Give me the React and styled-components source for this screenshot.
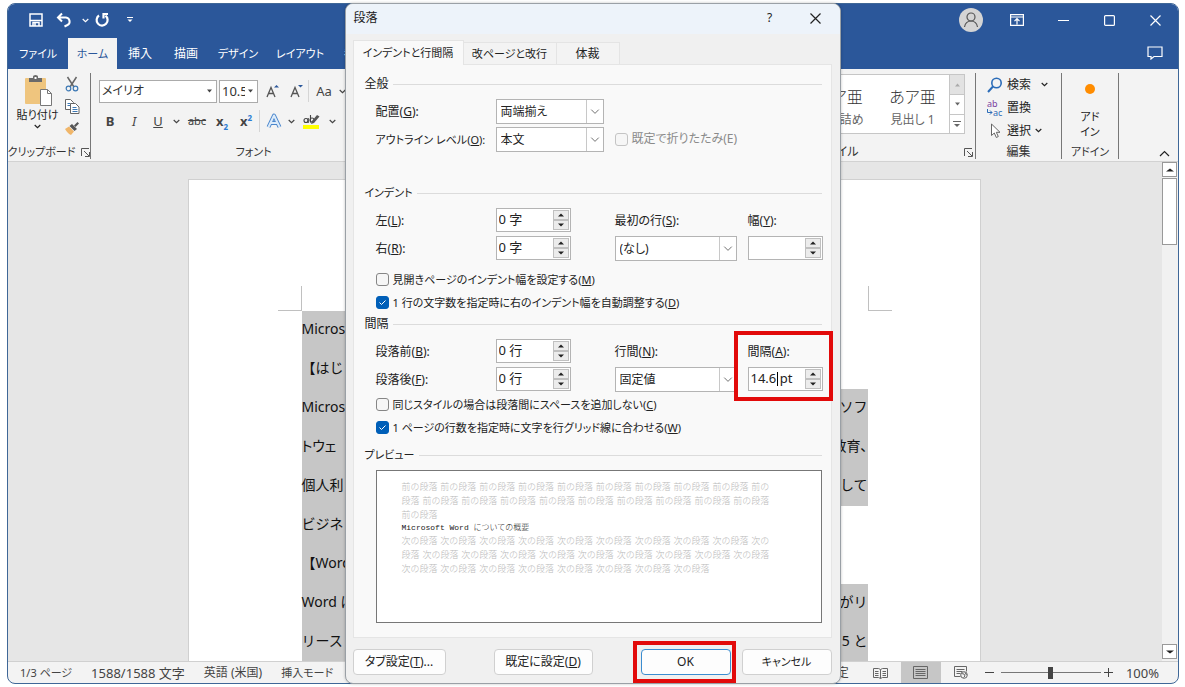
import React, { useState } from "react";
import styled, { createGlobalStyle, css } from "styled-components";

const GlobalStyle = createGlobalStyle`
  * {
    box-sizing: border-box;
  }
  body {
    margin: 0;
    background: #fff;
    color: #222;
    font-family: "Noto Sans", "Noto Sans CJK JP", sans-serif;
    font-size: 12px;
    line-height: 18px;
    font-feature-settings: "palt";
  }
  button, input, select {
    font: inherit;
    font-feature-settings: inherit;
    color: inherit;
    margin: 0;
  }
  svg {
    flex: none;
  }
`;

/* ---------- window ---------- */

const Screen = styled.div`
  height: 100vh;
  min-height: 687px;
  padding: 3px 6px 3px 7px;
`;

const AppWindow = styled.div`
  position: relative;
  display: flex;
  flex-direction: column;
  height: 100%;
  border: 1px solid #3f6797;
  border-radius: 8px;
  background: #f3f3f3;
`;

const Header = styled.header`
  background: #2b579a;
  color: #fff;
  border-radius: 7px 7px 0 0;
`;

const TitleBar = styled.div`
  display: flex;
  align-items: center;
  height: 34px;
  padding-bottom: 2px;
`;

const QuickAccess = styled.div`
  display: flex;
  align-items: center;
  flex: 1;
  padding-left: 17px;
`;

const IconButton = styled.button`
  display: flex;
  align-items: center;
  justify-content: center;
  flex: none;
  width: ${(p) => p.$w || 22}px;
  height: ${(p) => p.$h || 22}px;
  padding: 0;
  border: 0;
  background: none;
`;

const Avatar = styled.div`
  display: flex;
  align-items: center;
  justify-content: center;
  width: 24px;
  height: 24px;
  margin-right: 11px;
  border-radius: 50%;
  background: #d4d4d4;
`;

const TabRow = styled.nav`
  display: flex;
  height: 31px;
`;

const RibbonTab = styled.button`
  width: ${(p) => p.$w}px;
  padding: 0;
  border: 0;
  white-space: nowrap;
  font-size: ${(p) => (p.$kana ? 11 : 12)}px;
  background: ${(p) => (p.$active ? "#f3f3f3" : "none")};
  color: ${(p) => (p.$active ? "#2b579a" : "#fff")};
`;

const CommentCorner = styled.div`
  margin-left: auto;
`;

const Ribbon = styled.div`
  display: flex;
  height: 93px;
  padding-top: 4px;
  border-bottom: 1px solid #d2d2d2;
`;

const Group = styled.section`
  display: flex;
  flex-direction: column;
  flex: ${(p) => (p.$w ? "none" : 1)};
  width: ${(p) => p.$w || 0}px;
  height: 86px;
  border-right: ${(p) => (p.$line ? "1px solid #777" : "0")};
  white-space: nowrap;
`;

const GroupBody = styled.div`
  display: flex;
  flex: 1;
`;

const GroupFooter = styled.div`
  display: flex;
  align-items: center;
  justify-content: center;
  gap: 6px;
  height: 14px;
  line-height: 14px;
  color: #333;
  font-size: ${(p) => (p.$kana ? 11 : 12)}px;
`;

const StylesFooter = styled(GroupFooter)`
  display: grid;
  grid-template-columns: 1fr auto 1fr;
  padding-right: 2px;
  svg {
    grid-column: 3;
    justify-self: end;
  }
  span {
    grid-column: 2;
  }
`;

const PasteButton = styled.button`
  display: flex;
  flex-direction: column;
  align-items: center;
  width: 56px;
  padding: 2px 0 0 3px;
  border: 0;
  background: none;
  font-size: 11px;
`;

const SmallTools = styled.div`
  display: flex;
  flex-direction: column;
`;

const FontTools = styled.div`
  padding: 5px 0 0 8px;
`;

const ToolRow = styled.div`
  display: flex;
  align-items: center;
  height: 26px;
  margin-bottom: 4px;
  color: #444;
`;

const Combo = styled.span`
  position: relative;
  display: flex;
  margin-right: 2px;
  svg {
    position: absolute;
    right: 5px;
    top: 9px;
    pointer-events: none;
  }
  select {
    appearance: none;
    width: ${(p) => p.$w}px;
    height: 23px;
    padding: 0 ${(p) => p.$pad}px 0 2px;
    border: 1px solid #ababab;
    border-radius: 0;
    background: #fff;
    color: #333;
    font-size: ${(p) => p.$size}px;
    text-overflow: clip;
  }
`;

const Letter = styled.button`
  width: ${(p) => p.$w || 24}px;
  height: 24px;
  padding: 0;
  border: 0;
  background: none;
  font-size: ${(p) => (p.$small ? 11 : 13)}px;
  font-weight: ${(p) => (p.$bold ? 700 : 400)};
  font-style: ${(p) => (p.$italic ? "italic" : "normal")};
  text-decoration: ${(p) => p.$line || "none"};
  sub, sup {
    font-size: 8px;
    line-height: 0;
    color: #2b7cd3;
  }
`;

const Rule = styled.span`
  width: 1px;
  height: 22px;
  background: #d5d5d5;
`;

const Gallery = styled.div`
  display: flex;
  align-self: flex-start;
  margin: 1px 10px 0 auto;
  height: 60px;
  border: 1px solid #c6c6c6;
  background: #fff;
`;

const StyleCard = styled.button`
  width: 73px;
  padding: 6px 0 0;
  border: 0;
  background: none;
  color: #666;
  span {
    display: block;
    margin-bottom: 2px;
    font-size: 16px;
    line-height: 24px;
    font-weight: 300;
    color: #333;
  }
`;

const GalleryScroll = styled.div`
  display: grid;
  grid-template-rows: 1fr 1fr 1fr;
  width: 15px;
  border-left: 1px solid #c6c6c6;
  color: #666;
  button {
    width: 14px;
    height: auto;
  }
  button + button {
    border-top: 1px solid #c6c6c6;
  }
  button:first-child {
    background: #e2e2e2;
    color: #aaa;
  }
`;

const EditList = styled.div`
  display: flex;
  flex-direction: column;
  flex: 1;
  padding: 0 0 0 11px;
`;

const EditButton = styled.button`
  display: flex;
  align-items: center;
  gap: 4px;
  height: 23px;
  padding: 0;
  border: 0;
  background: none;
`;

const AddinButton = styled.button`
  display: flex;
  flex-direction: column;
  align-items: center;
  width: 100%;
  padding: 9px 0 0;
  border: 0;
  background: none;
  font-size: 11px;
  line-height: 15px;
`;

const Dot = styled.span`
  width: 10px;
  height: 10px;
  margin: 2px 0 15px;
  border-radius: 50%;
  background: #ff8c00;
`;

const Collapse = styled.div`
  display: flex;
  flex: none;
  width: 59px;
  align-items: flex-end;
  justify-content: flex-end;
  padding: 0 5px 0 0;
`;

/* ---------- document ---------- */

const Workspace = styled.main`
  display: flex;
  flex: 1;
  min-height: 0;
  background: #e6e6e6;
`;

const Canvas = styled.div`
  display: flex;
  justify-content: center;
  flex: 1;
  min-width: 0;
  padding: 17px 2px 0 0;
  overflow: hidden;
`;

const Paper = styled.article`
  flex: none;
  width: 793px;
  padding: 106px 88px 0 89px;
  border: 1px solid #d0d0d0;
  border-bottom: 0;
  background: #fff;
`;

const CropMarks = styled.div`
  display: flex;
  justify-content: space-between;
  height: 25px;
  &::before, &::after {
    content: "";
    width: 23px;
    border: 0 solid #c0c0c0;
    border-bottom-width: 1px;
  }
  &::before {
    border-right-width: 1px;
  }
  &::after {
    border-left-width: 1px;
  }
`;

const DocLine = styled.p`
  display: flex;
  justify-content: space-between;
  width: ${(p) => (p.$short ? "50%" : "auto")};
  margin: 0 24px;
  padding-bottom: 3px;
  background: #c6c6c6;
  color: #111;
  font-size: 14px;
  line-height: 36px;
  font-feature-settings: ${(p) => (p.$tight ? '"palt"' : "normal")};
  white-space: nowrap;
`;

const Scrollbar = styled.div`
  display: flex;
  flex-direction: column;
  width: 16px;
  padding-bottom: 2px;
  background: #f1f1f1;
  button {
    width: 15px;
    height: 15px;
    border: 1px solid #999;
    background: #fff;
  }
`;

const Thumb = styled.div`
  width: 15px;
  height: 67px;
  margin: 1px 0 auto;
  border: 1px solid #999;
  background: #fff;
`;

const StatusBar = styled.footer`
  display: flex;
  align-items: center;
  height: 22px;
  padding: 0 19px 0 12px;
  border-top: 1px solid #d0d0d0;
  border-radius: 0 0 7px 7px;
  color: #444;
  white-space: nowrap;
`;

const StatusTexts = styled.div`
  display: flex;
  flex: 1;
  gap: 19px;
`;

const StatusText = styled.span`
  font-size: ${(p) => p.$size || 12}px;
`;

const ViewTools = styled.div`
  display: flex;
  align-items: center;
  margin: 0 11px 0 12px;
`;

const ViewButton = styled(IconButton)`
  width: 40px;
  height: 21px;
  background: ${(p) => (p.$active ? "#c6c6c6" : "none")};
`;

const Zoom = styled.input`
  appearance: none;
  width: 100px;
  height: 16px;
  margin: 0 2px;
  background: linear-gradient(#777, #777) center / 100% 1px no-repeat;
  &::-webkit-slider-thumb {
    appearance: none;
    width: 5px;
    height: 12px;
    background: #444;
  }
`;

/* ---------- dialog ---------- */

const DialogBox = styled.div`
  position: absolute;
  top: -1px;
  left: 0;
  right: 1px;
  width: 496px;
  margin: 0 auto;
  border: 1px solid #9aa0a6;
  border-radius: 8px;
  background: #f0f0f0;
  box-shadow: 0 0 3px rgba(0, 0, 0, 0.25);
`;

const DialogTitle = styled.div`
  display: flex;
  align-items: center;
  height: 30px;
  padding: 0 1px 2px 8px;
  border-radius: 7px 7px 0 0;
  background: #edf3fa;
  h2 {
    flex: 1;
    margin: 0;
    font-size: 12px;
    font-weight: 400;
  }
`;

const DialogTabs = styled.div`
  display: flex;
  align-items: flex-end;
  height: 30px;
  padding: 0 7px;
`;

const DialogTab = styled.button`
  width: ${(p) => p.$w}px;
  height: 22px;
  padding: 0;
  border: 1px solid #e4e4e4;
  border-width: 1px 1px 0 0;
  background: #f3f3f3;
  font-size: ${(p) => (p.$kana ? 11 : 12)}px;
  white-space: nowrap;
  ${(p) =>
    p.$active &&
    css`
      position: relative;
      height: 25px;
      margin-bottom: -1px;
      border-left-width: 1px;
      background: #f9f9f9;
    `}
`;

const Panel = styled.div`
  margin: 0 8px 0 7px;
  padding: 10px 9px 14px 11px;
  border: 1px solid #e5e5e5;
  background: #f9f9f9;
`;

const Section = styled.section`
  margin-top: ${(p) => p.$top || 0}px;
`;

const SectionTitle = styled.h3`
  display: flex;
  align-items: center;
  gap: 4px;
  margin: 0 0 4px;
  font-size: ${(p) => (p.$kana ? 11 : 12)}px;
  font-weight: 400;
  &::after {
    content: "";
    flex: 1;
    height: 1px;
    background: #dcdcdc;
  }
`;

const Fields = styled.div`
  display: grid;
  grid-template-columns: 120px 119px 133px 75px;
  grid-auto-rows: 28px;
  align-items: center;
  padding-left: 11px;
  white-space: nowrap;
`;

const Label = styled.label`
  padding-top: 1px;
  font-size: ${(p) => (p.$kana ? 11 : 12)}px;
`;

const Stack = styled.div`
  position: relative;
  display: grid;
  grid-template-rows: 28px 28px;
  align-items: center;
  grid-row: 1 / 3;
  grid-column: ${(p) => p.$col};
`;

const SelectBox = styled.span`
  position: relative;
  display: block;
  width: ${(p) => p.$w}px;
  select {
    display: block;
    appearance: none;
    width: 100%;
    height: 25px;
    padding: 1px 20px 0 4px;
    border: 1px solid #b4b4b4;
    border-radius: 0;
    background: #fff;
  }
  svg {
    position: absolute;
    top: 1px;
    right: 1px;
    border-left: 1px solid #c8c8c8;
    pointer-events: none;
  }
`;

const SpinBox = styled.span`
  position: relative;
  display: flex;
  width: 75px;
  height: 24px;
  padding: 1px;
  border: 1px solid #b4b4b4;
  background: #fff;
  input {
    flex: 1;
    min-width: 0;
    padding: 0 1px 2px;
    border: 0;
    outline: 0;
    background: none;
    font-size: 13px;
  }
`;

const SpinButtons = styled.span`
  display: grid;
  grid-template-rows: 1fr 1fr;
  button {
    width: 16px;
    height: auto;
    border: 1px solid #c0c0c0;
    background: #ececec;
  }
`;

const Caret = styled.span`
  position: absolute;
  left: 28px;
  top: 4px;
  width: 1px;
  height: 14px;
  background: #000;
`;

const CheckList = styled.div`
  padding: ${(p) => p.$top || 0}px 0 0 11px;
`;

const CheckLabel = styled.label`
  display: flex;
  align-items: center;
  gap: 4px;
  height: ${(p) => (p.$inline ? 28 : 23)}px;
  color: ${(p) => (p.$muted ? "#8a8a8a" : "inherit")};
  font-size: ${(p) => (p.$inline ? 12 : 11)}px;
  white-space: nowrap;
  input {
    appearance: none;
    flex: none;
    width: 13px;
    height: 13px;
    border: 1px solid ${(p) => (p.$muted ? "#c4c4c4" : "#868686")};
    border-radius: 3px;
    background: #f6f6f6 center / 11px 11px no-repeat;
  }
  input:checked {
    border-color: #005fb8;
    background-color: #005fb8;
    background-image: url("data:image/svg+xml,%3Csvg xmlns='http://www.w3.org/2000/svg' viewBox='0 0 11 11'%3E%3Cpath d='M2.5 5.5l2 2 4-4' fill='none' stroke='white'/%3E%3C/svg%3E");
  }
`;

const Preview = styled.div`
  height: 153px;
  margin: 6px 0 0 11px;
  padding: 9px 0 0 25px;
  border: 1px solid #777;
  background: #fff;
  color: #b9b9b9;
  font-family: "DejaVu Sans", "Noto Sans CJK JP", sans-serif;
  font-size: 9px;
  line-height: 14px;
  font-weight: 300;
  font-feature-settings: normal;
  white-space: pre;
  p {
    margin: 0;
    color: #222;
    font-size: 8px;
    line-height: 12px;
    font-family: "Liberation Mono", "Noto Sans CJK JP", monospace;
  }
`;

const DialogFooter = styled.div`
  display: flex;
  justify-content: space-between;
  padding: 11px 8px 8px 7px;
`;

const ButtonPair = styled.div`
  display: flex;
  gap: 11px;
`;

const PushWrap = styled.span`
  position: relative;
  display: flex;
`;

const PushButton = styled.button`
  width: ${(p) => p.$w || 90}px;
  height: 26px;
  padding: 0;
  border: 1px solid ${(p) => (p.$primary ? "#3b8dd0" : "#d0d0d0")};
  border-radius: 4px;
  background: #fdfdfd;
  font-size: ${(p) => (p.$kana ? 11 : 12)}px;
  white-space: nowrap;
`;

const Highlight = styled.span`
  position: absolute;
  inset: ${(p) => p.$inset};
  border: 4px solid #e20a0a;
  pointer-events: none;
`;

/* ---------- icons ---------- */

const Svg = ({ w = 16, h = w, children, ...rest }) => (
  <svg
    width={w}
    height={h}
    viewBox={`0 0 ${w} ${h}`}
    fill="none"
    stroke="currentColor"
    aria-hidden="true"
    {...rest}
  >
    {children}
  </svg>
);

const Chevron = () => (
  <Svg w={7} h={5} strokeWidth="1.2">
    <path d="M.7 1l2.8 2.6L6.3 1" />
  </Svg>
);

const Triangle = ({ up, w = 5 }) => (
  <Svg w={w} h={4} stroke="none" fill="currentColor">
    <path d={up ? `M0 3.5L${w / 2} 0.5L${w} 3.5z` : `M0 .5L${w / 2} 3.5L${w} .5z`} />
  </Svg>
);

const SelectArrow = () => (
  <Svg w={17} h={23} stroke="#666">
    <path d="M4.5 9.5l4 4 4-4" />
  </Svg>
);

const SaveIcon = () => (
  <Svg w={14} strokeWidth="1.5">
    <path d="M1 1h12v12H1z" />
    <path d="M1 7.5h12" />
    <path d="M4 13v-3.500h6V13M6 10v3" />
  </Svg>
);

const UndoIcon = () => (
  <Svg w={16} strokeWidth="2">
    <path d="M6 1.500L2 5.500l4 4M2.500 5.500h7.500a4 4 0 0 1 1.500 7.500l-3 1.500" />
  </Svg>
);

const RedoIcon = () => (
  <Svg w={16} strokeWidth="2.2">
    <path d="M5 3.500a5.500 5.500 0 1 0 6.500.2" />
    <path d="M14 2H9.500v4.500" />
  </Svg>
);

const LauncherIcon = () => (
  <Svg w={9} stroke="#555">
    <path d="M.5 8V.5H8M3 3l5 5M8.500 4v4.500H4" />
  </Svg>
);

const PasteIcon = () => (
  <Svg w={28} h={31} stroke="none">
    <rect x="1" y="3" width="21" height="26" rx="1" fill="#efc57e" />
    <path d="M5 3h4V1.500Q9 0 11.500 0T14 1.500V3h4v4H5z" fill="#6a6a6a" />
    <path d="M10.500 2h2v2h-2z" fill="#fff" />
    <path d="M16.500 14.500h7l4 4v12h-11z" fill="#fff" stroke="#777" />
    <path d="M23.500 14.500v4h4" stroke="#777" />
  </Svg>
);

const CutIcon = () => (
  <Svg w={14} h={16}>
    <path d="M2.500 1l6.500 10M11.500 1L5 11" stroke="#666" strokeWidth="1.500" />
    <circle cx="3.500" cy="12.500" r="2.300" stroke="#3c78b4" strokeWidth="1.200" />
    <circle cx="10.500" cy="12.500" r="2.300" stroke="#3c78b4" strokeWidth="1.200" />
  </Svg>
);

const CopyIcon = () => (
  <Svg w={15} h={15} stroke="#666">
    <path d="M.5.5h5l3 3v7h-8z" fill="#fff" />
    <path d="M2.500 4.500h3M2.500 6.500h3" stroke="#3c78b4" />
    <path d="M5.500 4.500h5l3.500 3.500v6.500H5.500z" fill="#fff" />
    <path d="M7.500 8.500h4M7.500 10.500h5M7.500 12.500h5" stroke="#3c78b4" />
  </Svg>
);

const BrushIcon = () => (
  <Svg w={14} h={13} stroke="none">
    <path d="M0 7l4-2.500 5 5L6 13Q3 12 0 7z" fill="#f0b66a" />
    <path d="M4.500 4L7 2l5 5-2.500 2z" fill="#555" />
    <path d="M9 3.500L12.500 0 14 1.500 10.500 5z" fill="#555" />
  </Svg>
);

const GrowIcon = ({ down }) => (
  <Svg w={14} h={16}>
    <path d="M1 14L5 4.500 9 14M2.500 10.500h5" stroke="#555" strokeWidth="1.300" />
    <path d={down ? "M8 2h5l-2.500 2.500z" : "M8 4.500h5L10.500 2z"} fill="#2b579a" stroke="none" />
  </Svg>
);

const EffectIcon = () => (
  <Svg w={16} h={16} strokeLinejoin="round">
    <path d="M2.500 14L8 2.500 13.500 14M5 10h6" stroke="#4a86cc" strokeWidth="4" />
    <path d="M2.500 14L8 2.500 13.500 14M5 10h6" stroke="#dcebfa" strokeWidth="2" />
  </Svg>
);

const MarkerIcon = () => (
  <Svg w={18} h={17} stroke="none">
    <path d="M0 12h16v4H0z" fill="#ffff00" />
    <circle cx="3" cy="7.500" r="2" stroke="#444" strokeWidth="1.100" />
    <path d="M5.200 5v5M7.500 2v7.500" stroke="#444" strokeWidth="1.100" />
    <circle cx="9" cy="7" r="2" stroke="#444" strokeWidth="1.100" />
    <path d="M8 11l1-3 5-6 2.500 1.500L11 10z" fill="#555" />
  </Svg>
);

const PersonIcon = () => (
  <Svg w={16} h={18} stroke="#555" strokeWidth="1.200">
    <circle cx="8" cy="6" r="4" />
    <path d="M1.500 16q1-6 6.500-6t6.500 6" />
  </Svg>
);

const DisplayIcon = () => (
  <Svg w={14} h={12} strokeWidth="1.200">
    <path d="M.6.6h12.800v10.800H.6zM.6 3h12.800M7 10.500V5M4.500 7.200L7 4.700l2.500 2.500" />
  </Svg>
);

const MinIcon = () => (
  <Svg w={11}>
    <path d="M0 5.500h11" />
  </Svg>
);

const MaxIcon = () => (
  <Svg w={11} strokeWidth="1.200">
    <rect x=".6" y=".6" width="9.800" height="9.800" rx="1" />
  </Svg>
);

const CloseIcon = () => (
  <Svg w={11} strokeWidth="1.200">
    <path d="M.5.5l10 10M10.500.5l-10 10" />
  </Svg>
);

const CommentIcon = () => (
  <Svg w={16} h={14} strokeWidth="1.200">
    <path d="M1 1h14v9.500H7L4 13v-2.500H1z" />
  </Svg>
);

const SearchIcon = () => (
  <Svg w={16} stroke="#2b6cb8" strokeWidth="1.600">
    <circle cx="9.500" cy="6" r="4.700" />
    <path d="M6 9.500L1 15" strokeWidth="2" />
  </Svg>
);

const ReplaceMark = styled.span`
  display: grid;
  width: 16px;
  font-size: 9px;
  line-height: 9px;
  text-align: left;
  color: #7a3fa0;
  span {
    display: flex;
    align-items: center;
    color: #2b6cb8;
  }
`;

const PointerIcon = () => (
  <Svg w={16} stroke="#666">
    <path d="M4.500 1v11.500l2.800-2.500 2 4.500 2-1-2-4.200h3.700z" fill="#fff" />
  </Svg>
);

const ReadIcon = () => (
  <Svg w={15} h={12} stroke="#666">
    <path d="M.5 1.500h5l2 1 2-1h5v9h-5l-2 1-2-1h-5zM7.500 2.500v9" />
    <path d="M2 4.500h3.500M2 6.500h3.500M2 8.500h3.500M9.500 4.500H13M9.500 6.500H13M9.500 8.500H13" />
  </Svg>
);

const PrintIcon = () => (
  <Svg w={15} h={13} stroke="#666">
    <path d="M.5.5h14v12H.5zM2.500 3.500h10M2.500 5.500h10M2.500 7.500h10M2.500 9.500h10" />
  </Svg>
);

const WebIcon = () => (
  <Svg w={14} h={13} stroke="#666">
    <path d="M6.500 10.500h-6V.5h12v5M2.500 3.500h8M2.500 5.500h6M2.500 7.500h4" />
    <circle cx="10" cy="9" r="3.300" />
    <path d="M7.500 7.500l2.500.500 1 2-1.500 1.500M11 6.500l1.500 2.500" />
  </Svg>
);

/* ---------- parts ---------- */

const Dropdown = ({ id, w, value }) => (
  <SelectBox $w={w}>
    <select id={id} defaultValue={value}>
      <option>{value}</option>
    </select>
    <SelectArrow />
  </SelectBox>
);

const Spinner = ({ id, value, caret }) => (
  <SpinBox>
    <input id={id} type="text" defaultValue={value} />
    {caret && <Caret />}
    <SpinButtons>
      <IconButton aria-label="増やす">
        <Triangle up w={6} />
      </IconButton>
      <IconButton aria-label="減らす">
        <Triangle w={6} />
      </IconButton>
    </SpinButtons>
  </SpinBox>
);

const FieldLabel = ({ htmlFor, text, k, kana }) => (
  <Label htmlFor={htmlFor} $kana={kana}>
    {text}(<u>{k}</u>):
  </Label>
);

const Check = ({ text, k, checked, ...rest }) => {
  const [on, setOn] = useState(!!checked);
  return (
    <CheckLabel {...rest}>
      <input
        type="checkbox"
        checked={on}
        disabled={rest.$muted}
        onChange={() => setOn(!on)}
      />
      <span>
        {text}({rest.$muted ? k : <u>{k}</u>})
      </span>
    </CheckLabel>
  );
};

const ribbonTabs = [
  { name: "ファイル", w: 60, kana: true },
  { name: "ホーム", w: 49, kana: true },
  { name: "挿入", w: 46 },
  { name: "描画", w: 46 },
  { name: "デザイン", w: 58, kana: true },
  { name: "レイアウト", w: 66, kana: true },
  { name: "参", w: 34 },
];

const docLines = [
  { start: "Micros", short: true },
  { start: "【はじ", short: true },
  { start: "Micros", end: "ソフ" },
  { start: "トウェ", end: "教育、", tight: true },
  { start: "個人利", end: "して" },
  { start: "ビジネ", short: true },
  { start: "【Word", short: true },
  { start: "Word は", end: "がリ" },
  { start: "リース", end: "5 と" },
];

const before = "前の段落 ";
const after = "次の段落 ";

const TopBar = () => (
  <Header>
    <TitleBar>
      <QuickAccess>
        <IconButton aria-label="保存"><SaveIcon /></IconButton>
        <IconButton aria-label="元に戻す" $w={34}><UndoIcon /></IconButton>
        <IconButton aria-label="元に戻す一覧" $w={8}><Chevron /></IconButton>
        <IconButton aria-label="やり直し" $w={26}><RedoIcon /></IconButton>
        <IconButton aria-label="カスタマイズ" $w={30}>
          <Svg w={6} h={6}>
            <path d="M0 .5h6" />
            <path d="M.5 2.500h5L3 5z" fill="currentColor" stroke="none" />
          </Svg>
        </IconButton>
      </QuickAccess>
      <Avatar><PersonIcon /></Avatar>
      <IconButton aria-label="リボンの表示" $w={46}><DisplayIcon /></IconButton>
      <IconButton aria-label="最小化" $w={46}><MinIcon /></IconButton>
      <IconButton aria-label="最大化" $w={46}><MaxIcon /></IconButton>
      <IconButton aria-label="閉じる" $w={46}><CloseIcon /></IconButton>
    </TitleBar>
    <TabRow>
      {ribbonTabs.map(({ name, w, kana }) => (
        <RibbonTab key={name} $w={w} $kana={kana} $active={name === "ホーム"}>
          {name}
        </RibbonTab>
      ))}
      <CommentCorner>
        <IconButton aria-label="コメント" $w={46} $h={30}>
          <CommentIcon />
        </IconButton>
      </CommentCorner>
    </TabRow>
  </Header>
);

const RibbonBar = () => (
  <Ribbon>
    <Group $w={83} $line>
      <GroupBody>
        <PasteButton>
          <PasteIcon />
          貼り付け
          <Chevron />
        </PasteButton>
        <SmallTools>
          <IconButton aria-label="切り取り" $w={16}><CutIcon /></IconButton>
          <IconButton aria-label="コピー" $w={16}><CopyIcon /></IconButton>
          <IconButton aria-label="書式のコピー" $w={16}><BrushIcon /></IconButton>
        </SmallTools>
      </GroupBody>
      <GroupFooter $kana>
        クリップボード <LauncherIcon />
      </GroupFooter>
    </Group>
    <Group $w={326} $line>
      <GroupBody>
        <FontTools>
          <ToolRow>
            <Combo $w={118} $pad={16} $size={12}>
              <select aria-label="フォント"><option>メイリオ</option></select>
              <Triangle />
            </Combo>
            <Combo $w={39} $pad={12} $size={13}>
              <select aria-label="フォント サイズ"><option>10.5</option></select>
              <Triangle />
            </Combo>
            <IconButton aria-label="拡大" $w={26}><GrowIcon /></IconButton>
            <IconButton aria-label="縮小" $w={22}><GrowIcon down /></IconButton>
            <Rule />
            <Letter $w={30}>Aa</Letter>
            <Chevron />
          </ToolRow>
          <ToolRow>
            <Letter $bold $w={22}>B</Letter>
            <Letter $italic $w={26}>I</Letter>
            <Letter $line="underline" $w={22}>U</Letter>
            <IconButton aria-label="下線の種類" $w={14}><Chevron /></IconButton>
            <Letter $line="line-through" $w={28} $small>abc</Letter>
            <Letter $bold $w={22}>x<sub>2</sub></Letter>
            <Letter $bold $w={26}>x<sup>2</sup></Letter>
            <Rule />
            <IconButton aria-label="文字の効果" $w={28}><EffectIcon /></IconButton>
            <Chevron />
            <IconButton aria-label="蛍光ペン" $w={34}><MarkerIcon /></IconButton>
            <Chevron />
          </ToolRow>
        </FontTools>
      </GroupBody>
      <GroupFooter $kana>フォント</GroupFooter>
    </Group>
    <Group />
    <Group $w={275} $line>
      <GroupBody>
        <Gallery>
          <StyleCard><span>あア亜</span>行間詰め</StyleCard>
          <StyleCard><span>あア亜</span>見出し 1</StyleCard>
          <GalleryScroll>
            <IconButton aria-label="上へ"><Triangle up /></IconButton>
            <IconButton aria-label="下へ"><Triangle /></IconButton>
            <IconButton aria-label="その他">
              <Svg w={8} h={8}>
                <path d="M0 1.500h8" />
                <path d="M1 4h6L4 7z" fill="currentColor" stroke="none" />
              </Svg>
            </IconButton>
          </GalleryScroll>
        </Gallery>
      </GroupBody>
      <StylesFooter>
        <span>スタイル</span>
        <LauncherIcon />
      </StylesFooter>
    </Group>
    <Group $w={86} $line>
      <EditList>
        <EditButton><SearchIcon /> 検索 <IconButton as="span" $w={18}><Chevron /></IconButton></EditButton>
        <EditButton>
          <ReplaceMark>
            ab
            <span>
              <Svg w={6} h={7}>
                <path d="M.5 0v3.500H5M3 1.500l2 2-2 2" />
              </Svg>
              ac
            </span>
          </ReplaceMark>
          置換
        </EditButton>
        <EditButton><PointerIcon /> 選択 <Chevron /></EditButton>
      </EditList>
      <GroupFooter>編集</GroupFooter>
    </Group>
    <Group $w={57} $line>
      <GroupBody>
        <AddinButton>
          <Dot />
          <span>アド</span>
          <span>イン</span>
        </AddinButton>
      </GroupBody>
      <GroupFooter $kana>アドイン</GroupFooter>
    </Group>
    <Collapse>
      <IconButton aria-label="リボンを折りたたむ" $w={18} $h={16}>
        <Svg w={11} h={7} strokeWidth="1.200">
          <path d="M1 6l4.500-4.500L10 6" />
        </Svg>
      </IconButton>
    </Collapse>
  </Ribbon>
);

const Document = () => (
  <Workspace>
    <Canvas>
      <Paper>
        <CropMarks />
        {docLines.map(({ start, end, short, tight }, i) => (
          <DocLine key={i} $short={short} $tight={tight}>
            <span>{start}</span>
            <span>{end}</span>
          </DocLine>
        ))}
      </Paper>
    </Canvas>
    <Scrollbar>
      <IconButton aria-label="上にスクロール"><Triangle up w={8} /></IconButton>
      <Thumb />
      <IconButton aria-label="下にスクロール"><Triangle w={8} /></IconButton>
    </Scrollbar>
  </Workspace>
);

const Status = () => (
  <StatusBar>
    <StatusTexts>
      <StatusText $size={11}>1/3 ページ</StatusText>
      <StatusText $size={13}>1588/1588 文字</StatusText>
      <StatusText>英語 (米国)</StatusText>
      <StatusText $size={11}>挿入モード</StatusText>
    </StatusTexts>
    <StatusText>定</StatusText>
    <ViewTools>
      <ViewButton aria-label="閲覧モード"><ReadIcon /></ViewButton>
      <ViewButton aria-label="印刷レイアウト" $active><PrintIcon /></ViewButton>
      <ViewButton aria-label="Web レイアウト"><WebIcon /></ViewButton>
      <IconButton aria-label="縮小" $w={18}>
        <Svg w={9}><path d="M0 4.500h9" /></Svg>
      </IconButton>
      <Zoom type="range" aria-label="ズーム" defaultValue="50" />
      <IconButton aria-label="拡大" $w={12}>
        <Svg w={9}><path d="M0 4.500h9M4.500 0v9" /></Svg>
      </IconButton>
    </ViewTools>
    <StatusText $size={13}>100%</StatusText>
  </StatusBar>
);

const ParagraphDialog = () => (
  <DialogBox role="dialog" aria-label="段落">
    <DialogTitle>
      <h2>段落</h2>
      <IconButton aria-label="ヘルプ" $w={46}>?</IconButton>
      <IconButton aria-label="閉じる" $w={46}><CloseIcon /></IconButton>
    </DialogTitle>
    <DialogTabs>
      <DialogTab $w={111} $kana $active>インデントと行間隔</DialogTab>
      <DialogTab $w={93} $kana>改ページと改行</DialogTab>
      <DialogTab $w={63}>体裁</DialogTab>
    </DialogTabs>
    <Panel>
      <Section>
        <SectionTitle>全般</SectionTitle>
        <Fields>
          <FieldLabel htmlFor="align" text="配置" k="G" />
          <Dropdown id="align" w={108} value="両端揃え" />
          <span />
          <span />
          <FieldLabel htmlFor="level" text="アウトライン レベル" k="O" kana />
          <Dropdown id="level" w={108} value="本文" />
          <Check text="既定で折りたたみ" k="E" $muted $inline />
        </Fields>
      </Section>
      <Section $top={31}>
        <SectionTitle $kana>インデント</SectionTitle>
        <Fields>
          <FieldLabel htmlFor="left" text="左" k="L" />
          <Spinner id="left" value="0 字" />
          <Stack $col={3}>
            <FieldLabel htmlFor="first" text="最初の行" k="S" />
            <Dropdown id="first" w={122} value="(なし)" />
          </Stack>
          <Stack $col={4}>
            <FieldLabel htmlFor="by" text="幅" k="Y" />
            <Spinner id="by" value="" />
          </Stack>
          <FieldLabel htmlFor="right" text="右" k="R" />
          <Spinner id="right" value="0 字" />
        </Fields>
        <CheckList $top={6}>
          <Check text="見開きページのインデント幅を設定する" k="M" />
          <Check text="1 行の文字数を指定時に右のインデント幅を自動調整する" k="D" checked />
        </CheckList>
      </Section>
      <Section $top={1}>
        <SectionTitle>間隔</SectionTitle>
        <Fields>
          <FieldLabel htmlFor="before" text="段落前" k="B" />
          <Spinner id="before" value="0 行" />
          <Stack $col={3}>
            <FieldLabel htmlFor="line" text="行間" k="N" />
            <Dropdown id="line" w={122} value="固定値" />
          </Stack>
          <Stack $col={4}>
            <FieldLabel htmlFor="at" text="間隔" k="A" />
            <Spinner id="at" value="14.6 pt" caret />
            <Highlight $inset="-6px -10px -8px -14px" />
          </Stack>
          <FieldLabel htmlFor="after" text="段落後" k="F" />
          <Spinner id="after" value="0 行" />
        </Fields>
        <CheckList>
          <Check text="同じスタイルの場合は段落間にスペースを追加しない" k="C" />
          <Check text="1 ページの行数を指定時に文字を行グリッド線に合わせる" k="W" checked />
        </CheckList>
      </Section>
      <Section $top={7}>
        <SectionTitle $kana>プレビュー</SectionTitle>
        <Preview>
          <div>{before.repeat(9)}前の</div>
          <div>段落 {before.repeat(9)}</div>
          <div>{before}</div>
          <p><b>Microsoft Word</b> についての概要</p>
          <div>{after.repeat(9)}次の</div>
          <div>段落 {after.repeat(9)}</div>
          <div>{after.repeat(8)}</div>
        </Preview>
      </Section>
    </Panel>
    <DialogFooter>
      <PushButton $w={93}>タブ設定(<u>T</u>)...</PushButton>
      <PushButton $w={99}>既定に設定(<u>D</u>)</PushButton>
      <ButtonPair>
        <PushWrap>
          <PushButton $primary>OK</PushButton>
          <Highlight $inset="-8px -5px -8px -8px" />
        </PushWrap>
        <PushButton $kana>キャンセル</PushButton>
      </ButtonPair>
    </DialogFooter>
  </DialogBox>
);

const App = () => (
  <Screen>
    <GlobalStyle />
    <AppWindow>
      <TopBar />
      <RibbonBar />
      <Document />
      <Status />
      <ParagraphDialog />
    </AppWindow>
  </Screen>
);

export default App;
